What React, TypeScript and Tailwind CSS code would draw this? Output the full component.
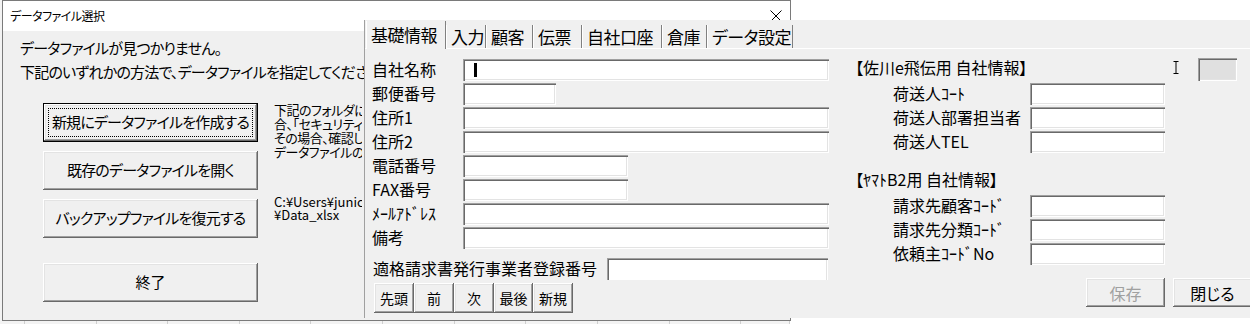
import React from 'react';

const jp = "font-['Noto_Sans_CJK_JP','Noto_Sans',sans-serif] [font-feature-settings:'palt']";
const raised =
    'bg-[#f0f0f0] shadow-[inset_-1px_-1px_0_#696969,inset_1px_1px_0_#ffffff,inset_-2px_-2px_0_#a0a0a0,inset_2px_2px_0_#e3e3e3]';
const sunken =
    'bg-white shadow-[inset_1px_1px_0_#a0a0a0,inset_2px_2px_0_#696969,inset_-1px_-1px_0_#ffffff,inset_-2px_-2px_0_#e3e3e3]';

function Backdrop() {
    const cols = [25, 72, 72, 72, 72, 72, 72, 72, 72, 72, 72, 49];
    return (
        <div className="absolute left-0 top-0 w-[790px] h-[324px] bg-[#f3f3f3] flex">
            {cols.map((w, i) => (
                <div key={i} className="h-full border-r border-[#cfcfcf]" style={{ width: w }} />
            ))}
        </div>
    );
}

function DataFileDialog() {
    const buttons = ['新規にデータファイルを作成する', '既存のデータファイルを開く', 'バックアップファイルを復元する'];
    return (
        <div className="absolute left-[2px] top-0 w-[789px] h-[321px] border border-[#7a7a7a] bg-[#f0f0f0] flex flex-col">
            <div className="h-[30px] shrink-0 bg-white flex items-center justify-between pl-[7px] pr-[8px]">
                <span className="text-[12px] leading-none tracking-[-0.5px]">データファイル選択</span>
                <svg width="12" height="12" viewBox="0 0 12 12">
                    <path d="M0.5 0.5L11.5 11.5M11.5 0.5L0.5 11.5" stroke="#000" strokeWidth="1" />
                </svg>
            </div>
            {/* the settings window sits over the right part, so clip the text at its edge */}
            <div className="w-[361px] overflow-hidden pl-[17px] pt-[5px] text-[15px] leading-[24px] tracking-[-0.8px] whitespace-nowrap">
                <p>データファイルが見つかりません。</p>
                <p>下記のいずれかの方法で、データファイルを指定してください。</p>
            </div>
            <div className="flex gap-[16px] pl-[40px] mt-[19px]">
                <div className="w-[215px] flex flex-col gap-[9px]">
                    {buttons.map((label, i) => (
                        <button
                            key={label}
                            className={`relative h-[39px] text-[15px] tracking-[-0.8px] whitespace-nowrap ${raised} ${
                                i === 0 ? 'border border-black' : ''
                            }`}
                        >
                            {i === 0 && (
                                <span className="absolute inset-[4px] border border-dotted border-black" />
                            )}
                            {label}
                        </button>
                    ))}
                    <button className={`h-[39px] mt-[16px] text-[15px] ${raised}`}>終了</button>
                </div>
                <div className="w-[88px] overflow-hidden whitespace-nowrap">
                    <div className="text-[13px] leading-[14px] tracking-[-0.5px]">
                        <p>下記のフォルダにデータファイルがない場</p>
                        <p>合、「セキュリティ」の設定で開けない場合があります。</p>
                        <p>その場合、確認してください。</p>
                        <p>データファイルの場所：</p>
                    </div>
                    <div className="mt-[36px] text-[13px] leading-[13px]">
                        <p>C:¥Users¥junichi¥Documents</p>
                        <p>¥Data_xlsx</p>
                    </div>
                </div>
            </div>
        </div>
    );
}

function Input({ w, h = 22, cursor = false }: { w: number; h?: number; cursor?: boolean }) {
    return (
        <div className={`relative shrink-0 ${sunken}`} style={{ width: w, height: h }}>
            {cursor && <span className="absolute left-[11px] top-[4px] w-[3px] h-[14px] bg-black" />}
        </div>
    );
}

function Row({ label, w, labelW, cursor }: { label: string; w: number; labelW: number; cursor?: boolean }) {
    return (
        <div className="flex items-start h-[24px]">
            <span className="shrink-0 text-[16px] leading-[21px] whitespace-nowrap" style={{ width: labelW }}>
                {label}
            </span>
            <Input w={w} cursor={cursor} />
        </div>
    );
}

function SettingsForm() {
    const tabs = [
        { label: '基礎情報', w: 80 },
        { label: '入力', w: 40 },
        { label: '顧客', w: 47 },
        { label: '伝票', w: 49 },
        { label: '自社口座', w: 80 },
        { label: '倉庫', w: 45 },
        { label: 'データ設定', w: 86 },
    ];
    const leftRows = [
        { label: '自社名称', w: 366, cursor: true },
        { label: '郵便番号', w: 93 },
        { label: '住所1', w: 366 },
        { label: '住所2', w: 366 },
        { label: '電話番号', w: 165 },
        { label: 'FAX番号', w: 165 },
        { label: 'ﾒｰﾙｱﾄﾞﾚｽ', w: 366 },
        { label: '備考', w: 366 },
    ];
    const nav = [
        { label: '先頭', w: 40 },
        { label: '前', w: 40 },
        { label: '次', w: 40 },
        { label: '最後', w: 39 },
        { label: '新規', w: 40 },
    ];
    return (
        <div className="absolute left-[364px] top-[20px] w-[900px] h-[298px] bg-[#f0f0f0] border-l border-[#a0a0a0] flex flex-col">
            <div className="h-[29px] shrink-0 flex items-end border-b border-white pl-px">
                {tabs.map((t, i) => (
                    <div
                        key={t.label}
                        className={`flex items-center pl-[5px] text-[17px] leading-none whitespace-nowrap tracking-[-0.5px] border-r border-[#808080] shadow-[inset_1px_0_0_#ffffff] ${
                            i === 0 ? 'h-[28px] -mb-px bg-[#f0f0f0] pb-px' : 'h-[23px]'
                        }`}
                        style={{ width: t.w }}
                    >
                        {t.label}
                    </div>
                ))}
            </div>
            <div className="flex">
                <div className="w-[476px] shrink-0 flex flex-col">
                    <div className="h-[231px] overflow-hidden pl-[7px] pt-[10px]">
                        {leftRows.map((r) => (
                            <Row key={r.label} label={r.label} w={r.w} labelW={91} cursor={r.cursor} />
                        ))}
                        <div className="flex items-start mt-[7px] ml-px gap-[10px]">
                            <span className="text-[16px] leading-[21px] whitespace-nowrap">適格請求書発行事業者登録番号</span>
                            <Input w={221} h={26} />
                        </div>
                    </div>
                    <div className="flex mt-[3px] ml-[9px]">
                        {nav.map((b) => (
                            <button key={b.label} className={`h-[30px] text-[14px] ${raised}`} style={{ width: b.w }}>
                                {b.label}
                            </button>
                        ))}
                    </div>
                </div>
                <div className="flex-1 pl-[14px] pt-[8px]">
                    <div className="relative h-[26px] flex items-start">
                        <span className="text-[16px] leading-[21px] whitespace-nowrap">【佐川e飛伝用 自社情報】</span>
                        <svg className="absolute left-[318px] top-[4px]" width="6" height="13" viewBox="0 0 6 13">
                            <path d="M0.5 0.5H5.5M3 0.5V12.5M0.5 12.5H5.5" stroke="#000" strokeWidth="1" fill="none" />
                        </svg>
                        <div className="absolute left-[343px] top-px w-[39px] h-[23px] bg-[#e0e0e0] shadow-[inset_1px_1px_0_#a0a0a0,inset_2px_2px_0_#696969,inset_-1px_-1px_0_#ffffff,inset_-2px_-2px_0_#e3e3e3]" />
                    </div>
                    <div className="pl-[38px]">
                        <Row label="荷送人ｺｰﾄ" w={135} labelW={137} />
                        <Row label="荷送人部署担当者" w={135} labelW={137} />
                        <Row label="荷送人TEL" w={135} labelW={137} />
                    </div>
                    <div className="h-[26px] mt-[14px] text-[16px] leading-[21px] whitespace-nowrap">【ﾔﾏﾄB2用 自社情報】</div>
                    <div className="pl-[38px]">
                        <Row label="請求先顧客ｺｰﾄﾞ" w={135} labelW={137} />
                        <Row label="請求先分類ｺｰﾄﾞ" w={135} labelW={137} />
                        <Row label="依頼主ｺｰﾄﾞNo" w={135} labelW={137} />
                    </div>
                    <div className="flex gap-[8px] mt-[11px] ml-[231px]">
                        <button className={`w-[79px] h-[29px] text-[16px] text-[#a0a0a0] ${raised}`}>保存</button>
                        <button className={`w-[79px] h-[29px] text-[16px] ${raised}`}>閉じる</button>
                    </div>
                </div>
            </div>
        </div>
    );
}

export default function App() {
    return (
        <div className={`relative w-[1250px] h-[324px] overflow-hidden bg-white text-black ${jp}`}>
            <Backdrop />
            <DataFileDialog />
            <SettingsForm />
        </div>
    );
}
